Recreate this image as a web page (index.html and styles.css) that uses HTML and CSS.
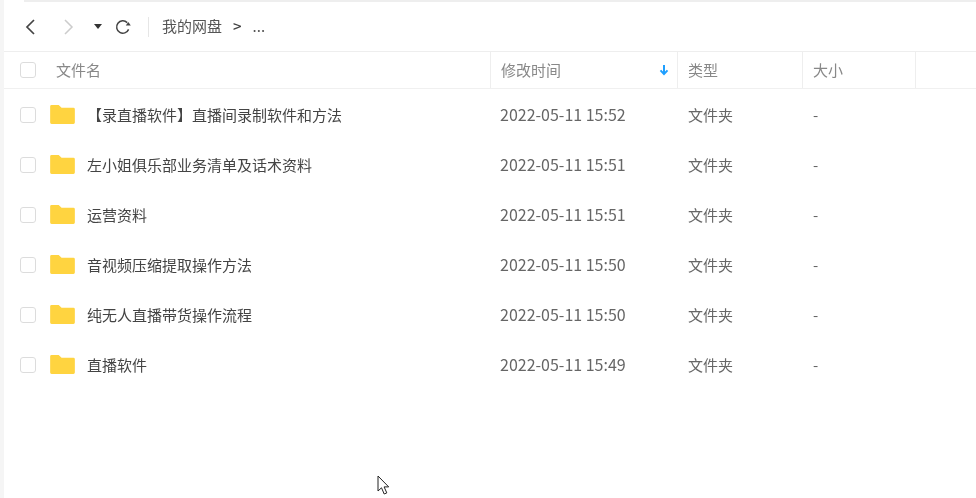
FILE: index.html
```html
<!DOCTYPE html>
<html lang="zh-CN">
<head>
<meta charset="utf-8">
<title>我的网盘</title>
<link rel="stylesheet" href="styles.css">
</head>
<body>
<div class="page">
  <div class="topline"></div>
  <div class="toolbar">
    <svg class="ic back" width="12" height="18" viewBox="0 0 12 18"><path d="M10 2 3 9l7 7" fill="none" stroke="#444" stroke-width="1.7"/></svg>
    <svg class="ic fwd" width="12" height="18" viewBox="0 0 12 18"><path d="M2 2l7 7-7 7" fill="none" stroke="#ccc" stroke-width="1.5"/></svg>
    <svg class="ic drop" width="8" height="5" viewBox="0 0 8 5"><path d="M0 0h8L4 5z" fill="#333"/></svg>
    <svg class="ic refresh" width="18" height="18" viewBox="0 0 18 18"><path d="M14.600 11.400A6.200 6.200 0 1 1 13.200 4.600" fill="none" stroke="#444" stroke-width="1.500"/><path d="M11.800 7.400h5l-2.500-3.400z" fill="#444"/></svg>
    <span class="sep"></span>
    <span class="crumb">我的网盘</span>
    <span class="gt">&gt;</span>
    <span class="dots">...</span>
  </div>
  <div class="head">
    <div class="c-name"><span class="check"></span><span class="hname">文件名</span></div>
    <div class="c-time hcell"><span class="htext">修改时间</span><svg class="sort" width="10" height="12" viewBox="0 0 10 12"><path d="M5 1v9M1.500 6.400 5 10l3.500-3.600" fill="none" stroke="#1e9fff" stroke-width="2"/></svg></div>
    <div class="c-type hcell"><span class="htext">类型</span></div>
    <div class="c-size hcell"><span class="htext">大小</span></div>
    <div class="c-rest hcell"></div>
  </div>
  <div class="list">
    <div class="row"><div class="c-name"><span class="check"></span><svg class="folder" width="25" height="19" viewBox="0 0 26 20"><path d="M1.500 0h7.500l3 3h12.500a1.500 1.500 0 0 1 1.500 1.500v14a1.500 1.500 0 0 1-1.500 1.500h-23a1.500 1.500 0 0 1-1.500-1.500v-17a1.500 1.500 0 0 1 1.500-1.500z" fill="#ffd440"/></svg><span class="fname">【录直播软件】直播间录制软件和方法</span></div><div class="c-time cell">2022-05-11 15:52</div><div class="c-type cell">文件夹</div><div class="c-size cell">-</div></div>
    <div class="row"><div class="c-name"><span class="check"></span><svg class="folder" width="25" height="19" viewBox="0 0 26 20"><path d="M1.500 0h7.500l3 3h12.500a1.500 1.500 0 0 1 1.500 1.500v14a1.500 1.500 0 0 1-1.500 1.500h-23a1.500 1.500 0 0 1-1.500-1.500v-17a1.500 1.500 0 0 1 1.500-1.500z" fill="#ffd440"/></svg><span class="fname">左小姐俱乐部业务清单及话术资料</span></div><div class="c-time cell">2022-05-11 15:51</div><div class="c-type cell">文件夹</div><div class="c-size cell">-</div></div>
    <div class="row"><div class="c-name"><span class="check"></span><svg class="folder" width="25" height="19" viewBox="0 0 26 20"><path d="M1.500 0h7.500l3 3h12.500a1.500 1.500 0 0 1 1.500 1.500v14a1.500 1.500 0 0 1-1.500 1.500h-23a1.500 1.500 0 0 1-1.500-1.500v-17a1.500 1.500 0 0 1 1.500-1.500z" fill="#ffd440"/></svg><span class="fname">运营资料</span></div><div class="c-time cell">2022-05-11 15:51</div><div class="c-type cell">文件夹</div><div class="c-size cell">-</div></div>
    <div class="row"><div class="c-name"><span class="check"></span><svg class="folder" width="25" height="19" viewBox="0 0 26 20"><path d="M1.500 0h7.500l3 3h12.500a1.500 1.500 0 0 1 1.500 1.500v14a1.500 1.500 0 0 1-1.500 1.500h-23a1.500 1.500 0 0 1-1.500-1.500v-17a1.500 1.500 0 0 1 1.500-1.500z" fill="#ffd440"/></svg><span class="fname">音视频压缩提取操作方法</span></div><div class="c-time cell">2022-05-11 15:50</div><div class="c-type cell">文件夹</div><div class="c-size cell">-</div></div>
    <div class="row"><div class="c-name"><span class="check"></span><svg class="folder" width="25" height="19" viewBox="0 0 26 20"><path d="M1.500 0h7.500l3 3h12.500a1.500 1.500 0 0 1 1.500 1.500v14a1.500 1.500 0 0 1-1.500 1.500h-23a1.500 1.500 0 0 1-1.500-1.500v-17a1.500 1.500 0 0 1 1.500-1.500z" fill="#ffd440"/></svg><span class="fname">纯无人直播带货操作流程</span></div><div class="c-time cell">2022-05-11 15:50</div><div class="c-type cell">文件夹</div><div class="c-size cell">-</div></div>
    <div class="row"><div class="c-name"><span class="check"></span><svg class="folder" width="25" height="19" viewBox="0 0 26 20"><path d="M1.500 0h7.500l3 3h12.500a1.500 1.500 0 0 1 1.500 1.500v14a1.500 1.500 0 0 1-1.500 1.500h-23a1.500 1.500 0 0 1-1.500-1.500v-17a1.500 1.500 0 0 1 1.500-1.500z" fill="#ffd440"/></svg><span class="fname">直播软件</span></div><div class="c-time cell">2022-05-11 15:49</div><div class="c-type cell">文件夹</div><div class="c-size cell">-</div></div>
  </div>
  <svg class="cursor" width="14" height="22" viewBox="0 0 14 22"><path d="M1 1v15l3.500-3.200 2.700 6.200 2.600-1.100-2.700-6h4.600z" fill="#fff" stroke="#222" stroke-width="1"/></svg>
</div>
</body>
</html>
```
FILE: styles.css
```css
* { box-sizing: border-box; }
html, body { margin: 0; padding: 0; background: #fff; }
body { width: 976px; height: 498px; overflow: hidden; font-family: "Noto Sans CJK SC", "Noto Sans", sans-serif; }
.page { position: relative; width: 976px; height: 498px; margin: 0; border-left: 4px solid #f5f5f5; filter: blur(0.3px); }
.topline { height: 2px; margin-left: 20px; background: #eeeeee; }
.toolbar { height: 50px; display: flex; align-items: center; border-bottom: 1px solid #eeeeee; }
.ic { flex: none; display: block; }
.back { margin-left: 20px; }
.fwd { margin-left: 27px; }
.drop { margin-left: 19px; }
.refresh { margin-left: 12px; }
.sep { width: 1px; height: 20px; margin-left: 16px; background: #e6e6e6; }
.crumb { margin-left: 13px; padding-bottom: 2px; font-size: 15px; color: #555; }
.gt { margin-left: 11px; padding-bottom: 2px; font-size: 15px; font-weight: 500; color: #444; }
.dots { margin-left: 11px; padding-bottom: 2px; font-size: 15px; color: #555; }
.head { height: 37px; display: flex; border-bottom: 1px solid #f0f0f0; }
.list { padding-top: 1px; }
.row { height: 50px; display: flex; align-items: center; }
.c-name { width: 486px; display: flex; align-items: center; flex: none; }
.c-time { width: 187px; flex: none; }
.c-type { width: 125px; flex: none; }
.c-size { width: 113px; flex: none; }
.c-rest { flex: 1; }
.check { width: 16px; height: 16px; margin-left: 16px; border: 1px solid #dcdcdc; border-radius: 3px; background: #fff; flex: none; }
.hname { margin-left: 20px; padding-bottom: 1px; font-size: 15px; color: #888; }
.hcell { display: flex; align-items: center; padding-left: 10px; font-size: 15px; color: #888; border-left: 1px solid #eeeeee; }
.htext { padding-bottom: 2px; }
.sort { margin-left: auto; margin-right: 8px; }
.folder { margin-left: 14px; margin-top: -2px; flex: none; }
.fname { margin-left: 12px; padding-bottom: 2px; font-size: 15px; color: #444; }
.cell { padding-left: 11px; padding-bottom: 2px; font-size: 15px; color: #666; }
.c-time.cell { padding-left: 10px; font-size: 16px; }
.cursor { position: absolute; left: 373px; top: 475px; }
```
